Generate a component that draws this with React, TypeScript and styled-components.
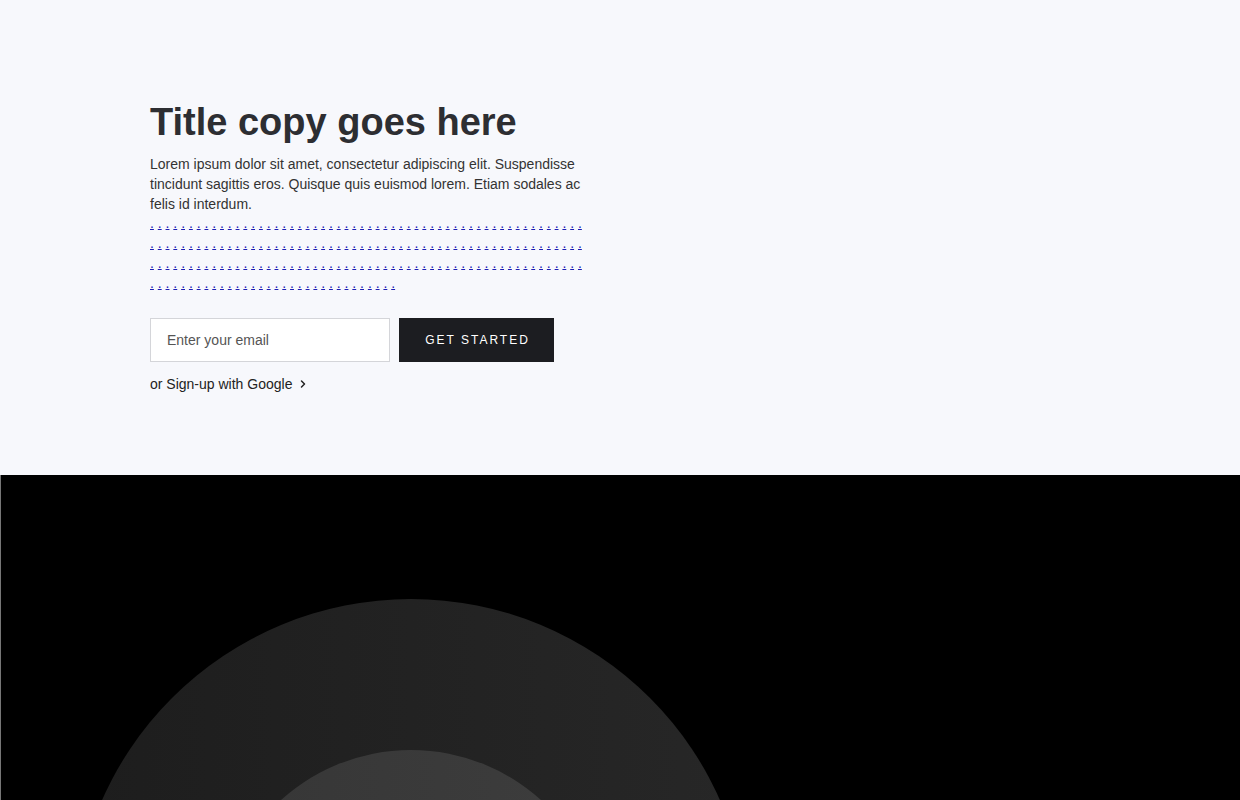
import React from "react";
import styled, { createGlobalStyle } from "styled-components";
import { ChevronRight } from "lucide-react";

const GlobalStyle = createGlobalStyle`
    html, body {
        margin: 0;
        padding: 0;
        background: #000;
        font-family: "Liberation Sans", Arial, sans-serif;
    }
    * {
        box-sizing: border-box;
    }
`;

const DOT_COUNT = 200;

const App: React.FC = () => {
    const dots = Array.from({ length: DOT_COUNT }, (_, i) => i);

    return (
        <>
            <GlobalStyle />
            <Hero>
                <Content>
                    <Title>Title copy goes here</Title>
                    <Lead>
                        Lorem ipsum dolor sit amet, consectetur adipiscing elit. Suspendisse tincidunt sagittis eros.
                        Quisque quis euismod lorem. Etiam sodales ac felis id interdum.
                    </Lead>
                    <DotLinks>
                        {dots.map(i => (
                            <React.Fragment key={i}>
                                <Dot href="#">.</Dot>{" "}
                            </React.Fragment>
                        ))}
                    </DotLinks>
                    <SignupForm onSubmit={e => e.preventDefault()}>
                        <EmailInput type="email" placeholder="Enter your email" />
                        <StartButton type="submit">Get started</StartButton>
                    </SignupForm>
                    <GoogleLink href="#">
                        or Sign-up with Google
                        <ChevronRight size={12} strokeWidth={3} />
                    </GoogleLink>
                </Content>
            </Hero>
            <Showcase>
                <Rings viewBox="0 0 1239 600" preserveAspectRatio="xMinYMin slice" aria-hidden="true">
                    <defs>
                        <linearGradient id="outerRing" x1="0" x2="1" y1="0" y2="0">
                            <stop offset="0" stopColor="#1d1d1d" />
                            <stop offset="1" stopColor="#272727" />
                        </linearGradient>
                        <linearGradient id="innerRing" x1="0" x2="1" y1="0" y2="0">
                            <stop offset="0" stopColor="#363636" />
                            <stop offset="1" stopColor="#3d3d3d" />
                        </linearGradient>
                    </defs>
                    <circle cx="410" cy="462" r="338" fill="url(#outerRing)" />
                    <circle cx="410" cy="469" r="194" fill="url(#innerRing)" />
                </Rings>
            </Showcase>
        </>
    );
};

export default App;

const Hero = styled.section`
    background: #f7f8fc;
    height: 475px;
    padding: 99px 150px 0;
`;

const Content = styled.div`
    width: 436px;
`;

const Title = styled.h1`
    margin: 0 0 9px;
    font-size: 38px;
    line-height: 46px;
    font-weight: 700;
    color: #2d2e32;
    white-space: nowrap;
`;

const Lead = styled.p`
    margin: 0;
    font-size: 14px;
    line-height: 20px;
    color: #333;
`;

const DotLinks = styled.div`
    font-size: 14px;
    line-height: 20px;
    margin-top: -1px;
`;

const Dot = styled.a`
    color: #1c1cb4;
    text-decoration: underline;
`;

const SignupForm = styled.form`
    display: flex;
    gap: 9px;
    margin-top: 25px;
`;

const EmailInput = styled.input`
    width: 240px;
    height: 44px;
    padding: 0 16px;
    border: 1px solid #d4d5d9;
    background: #fff;
    font-family: inherit;
    font-size: 14px;
    color: #333;
    outline: none;

    &::placeholder {
        color: #555;
    }
`;

const StartButton = styled.button`
    width: 155px;
    height: 44px;
    padding: 0 0 0 2px;
    border: none;
    background: #1c1d21;
    color: #fff;
    font-family: inherit;
    font-size: 12px;
    letter-spacing: 2px;
    text-transform: uppercase;
    cursor: pointer;
`;

const GoogleLink = styled.a`
    display: inline-flex;
    align-items: center;
    gap: 5px;
    margin-top: 14px;
    font-size: 14px;
    line-height: 16px;
    color: #222;
    text-decoration: none;
`;

const Showcase = styled.section`
    height: 600px;
    background: #000;
    border-left: 1px solid #777;
    overflow: hidden;
`;

const Rings = styled.svg`
    display: block;
    width: 100%;
    height: 100%;
`;
